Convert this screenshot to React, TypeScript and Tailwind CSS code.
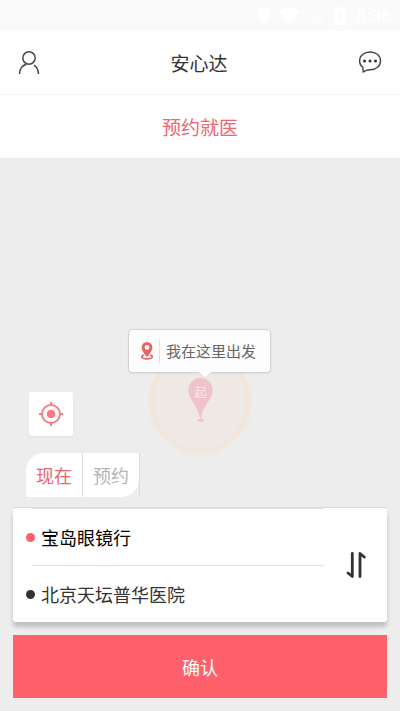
import { useState } from "react";

function StatusBar() {
  return (
    <div className="flex h-[31px] items-center justify-end bg-[#fafafa] pr-2 text-white">
      <svg className="mr-2 h-[18px] w-3" viewBox="0 0 12 18" fill="currentColor" aria-hidden="true">
        <path fillRule="evenodd" d="M6 0a6 6 0 0 0-6 6c0 4.500 6 12 6 12s6-7.500 6-12a6 6 0 0 0-6-6Zm0 4a2 2 0 1 1 0 4 2 2 0 0 1 0-4Z" />
      </svg>
      <svg className="mr-2 h-[18px] w-[22px]" viewBox="0 0 22 18" fill="currentColor" aria-hidden="true">
        <path d="M0 4Q11-3 22 4L11 18Z" />
      </svg>
      <svg className="mr-3 h-4 w-[14px] text-[#fcfcfc]" viewBox="0 0 14 16" fill="currentColor" aria-hidden="true">
        <path d="M0 15 14 1v14H9V9L3 15Z" />
      </svg>
      <svg className="mr-2.5 h-[18px] w-3" viewBox="0 0 12 18" fill="currentColor" aria-hidden="true">
        <path fillRule="evenodd" d="M0 2h3V0h6v2h3v16H0Zm7 2-4 6h2v4l4-6H7Z" />
      </svg>
      <span className="w-9 font-['Roboto',sans-serif] text-lg leading-5 font-medium whitespace-nowrap">8:36</span>
    </div>
  );
}

function Header() {
  return (
    <header className="flex h-16 items-center justify-between border-b border-[#f3f3f3] bg-white px-[18px]">
      <button type="button" aria-label="个人中心">
        <svg className="h-6 w-[22px]" viewBox="0 0 22 24" fill="none" stroke="#46434e" strokeWidth="1.500" aria-hidden="true">
          <circle cx="11" cy="7" r="6.200" />
          <path d="M1.500 23c0-4.500 2.500-8.300 6.800-9.800M16 14.100c2.700 1.800 4.500 5 4.500 8.900" />
        </svg>
      </button>
      <h1 className="text-[19px] leading-7 text-[#333]">安心达</h1>
      <button type="button" aria-label="消息">
        <svg className="h-6 w-6" viewBox="0 0 24 24" fill="none" stroke="#444" strokeWidth="1.400" aria-hidden="true">
          <path d="M4.800 16.500C2.700 14.900 1.600 12.600 1.600 10 1.600 4.700 6 1 12.100 1S22.500 4.700 22.500 9.900s-4.300 8.900-10.200 8.900c-1.600 0-2.800 0-4 .6L5.300 21Z" />
          <g fill="#333" stroke="none">
            <circle cx="6.500" cy="10" r="1.500" />
            <circle cx="12" cy="10" r="1.500" />
            <circle cx="17.500" cy="10" r="1.500" />
          </g>
        </svg>
      </button>
    </header>
  );
}

function MapPin() {
  return (
    <div className="absolute top-[171px] left-1/2 -ml-[72px] flex w-36 flex-col items-center">
      <div className="relative z-10 flex h-11 w-[143px] items-center self-start rounded border border-[#d2d2d2] bg-[#fdfdfd] pl-3 shadow-xs">
        <svg className="h-[18px] w-3" viewBox="0 0 12 18" aria-hidden="true">
          <path d="M3 13C-1 14.200.3 16.800 6 16.800s7-2.600 3-3.800" fill="none" stroke="#e66465" strokeWidth="1.700" />
          <path fill="#e66465" fillRule="evenodd" d="M6 0a5.400 5.400 0 0 0-5.400 5.400C.6 9 6 15 6 15s5.400-6 5.400-9.600A5.400 5.400 0 0 0 6 0Zm0 3a2.400 2.400 0 1 1 0 4.800A2.400 2.400 0 0 1 6 3Z" />
        </svg>
        <span className="ml-1.5 h-6 border-l border-[#e2e2e2]" />
        <span className="ml-1.5 text-[15px] leading-6 whitespace-nowrap text-[#666]">我在这里出发</span>
        <svg className="absolute top-[41px] left-[69px] h-2 w-[14px]" viewBox="0 0 14 8" aria-hidden="true">
          <path d="M0 0h14v1L7 7 0 1Z" fill="#fdfdfd" />
          <path d="M1 1.500 7 7l6-5.500" fill="none" stroke="#dedede" />
        </svg>
      </div>
      <div className="-mt-[22px] flex size-[102px] items-center justify-center rounded-full border-5 border-[#f0e6dc] bg-[#efe9e6] shadow-[0_0_6px_#ece9e3]">
        <svg className="mb-1 h-11 w-[25px]" viewBox="0 0 25 44" fill="#f0c3ca" aria-hidden="true">
          <path d="M12.500 0A12.300 12.300 0 0 0 .2 12.300C.2 21 10 27 12 41h1c2-14 11.800-20 11.800-28.700A12.300 12.300 0 0 0 12.500 0Z" />
          <ellipse cx="12.500" cy="42.500" rx="3.500" ry="1.300" />
          <text x="12.500" y="18.500" textAnchor="middle" fontSize="12" fill="#f9e8e9">起</text>
        </svg>
      </div>
    </div>
  );
}

function TimeTabs() {
  const [mode, setMode] = useState("now");
  return (
    <div className="mt-[17px] ml-[26px] flex h-11 w-[114px] text-lg leading-7">
      <button
        type="button"
        aria-pressed={mode === "now"}
        onClick={() => setMode("now")}
        className={`flex-1 rounded-tl-[18px] bg-white ${mode === "now" ? "text-[#ec6672]" : "text-[#b5b5b8]"}`}
      >
        现在
      </button>
      <div className="flex flex-1 border-x border-[#dedede]">
        <button
          type="button"
          aria-pressed={mode === "later"}
          onClick={() => setMode("later")}
          className={`flex-1 rounded-br-[18px] bg-white ${mode === "later" ? "text-[#ec6672]" : "text-[#b5b5b8]"}`}
        >
          预约
        </button>
      </div>
    </div>
  );
}

function RouteCard() {
  const [places, setPlaces] = useState(["宝岛眼镜行", "北京天坛普华医院"]);
  return (
    <section className="mx-[13px] mt-[10px] flex h-[115px] rounded-[3px] border-t border-[#d8d8d8] bg-white shadow-[0_5px_4px_#c0c0c0]">
      <div className="flex min-w-0 flex-1 flex-col pl-[13px] text-lg leading-7">
        <div className="ml-1.5 border-t border-[#e2e2e2]" />
        <button type="button" className="flex flex-1 items-center text-left text-black">
          <span className="mr-1.5 size-[9px] rounded-full bg-[#ff616c]" />
          {places[0]}
        </button>
        <div className="ml-1.5 border-t border-[#e2e2e2]" />
        <button type="button" className="flex flex-1 items-center text-left text-[#333]">
          <span className="mr-1.5 size-[9px] rounded-full bg-[#333]" />
          {places[1]}
        </button>
      </div>
      <button
        type="button"
        aria-label="交换起点和终点"
        onClick={() => setPlaces([places[1], places[0]])}
        className="flex w-[63px] items-center justify-center"
      >
        <svg className="h-[26px] w-5" viewBox="0 0 20 26" fill="none" stroke="#333" strokeWidth="2.800" strokeLinecap="round" strokeLinejoin="round" aria-hidden="true">
          <path d="M6.300 1.500v23L2 21M14 24.500v-23L18.300 5" />
        </svg>
      </button>
    </section>
  );
}

export default function App() {
  return (
    <div className="flex min-h-screen flex-col bg-[#ededed] font-['Noto_Sans_CJK_SC',sans-serif]">
      <StatusBar />
      <Header />
      <h2 className="flex h-[63px] items-center justify-center bg-white text-[19px] leading-7 text-[#ec6672]">预约就医</h2>
      <main className="relative flex flex-1 flex-col pt-[233px]">
        <MapPin />
        <button
          type="button"
          aria-label="定位"
          className="mt-auto ml-[29px] flex size-11 shrink-0 items-center justify-center rounded-[3px] bg-white shadow-xs"
        >
          <svg className="size-6" viewBox="0 0 24 24" fill="none" stroke="#f47f86" strokeWidth="2" aria-hidden="true">
            <circle cx="12" cy="12" r="9" />
            <circle cx="12" cy="12" r="4.300" fill="#ff7780" stroke="none" />
            <path d="M12 0v4M12 20v4M0 12h4M20 12h4" />
          </svg>
        </button>
        <TimeTabs />
        <RouteCard />
        <button type="button" className="mx-[13px] mt-[13px] mb-[13px] h-[63px] bg-[#ff616c] text-lg leading-7 text-white">
          确认
        </button>
      </main>
    </div>
  );
}
